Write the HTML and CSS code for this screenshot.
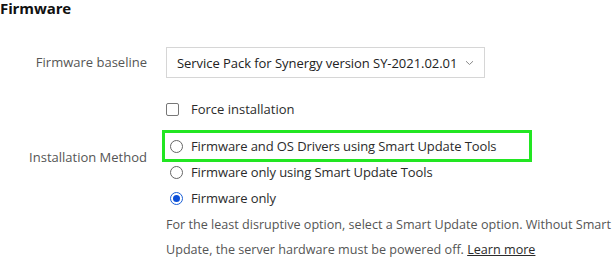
FILE: index.html
```html
<!DOCTYPE html>
<html>
<head>
<meta charset="utf-8">
<link rel="stylesheet" href="styles.css">
</head>
<body>
<div class="page">
  <h2 class="title">Firmware</h2>
  <div class="form">
    <div class="label label-select">Firmware baseline</div>
    <div class="control">
      <div class="select">
        <span class="select-text">Service Pack for Synergy version SY-2021.02.01</span>
        <svg class="chev" width="9" height="6" viewBox="0 0 9 6"><path d="M1 1.2 L4.5 4.5 L8 1.2" fill="none" stroke="#8a8a8a" stroke-width="1"/></svg>
      </div>
    </div>

    <div class="label"></div>
    <div class="control">
      <label class="check-row"><span class="checkbox"></span><span>Force installation</span></label>
    </div>

    <div class="label label-method">Installation Method</div>
    <div class="control">
      <div class="radios">
        <div class="highlight"></div>
        <div class="radio-row"><span class="radio"></span><span>Firmware and OS Drivers using Smart Update Tools</span></div>
        <div class="radio-row"><span class="radio"></span><span>Firmware only using Smart Update Tools</span></div>
        <div class="radio-row"><span class="radio checked"></span><span>Firmware only</span></div>
      </div>
      <p class="help">For the least disruptive option, select a Smart Update option. Without Smart Update, the server hardware must be powered off. <a class="link">Learn more</a></p>
    </div>
  </div>
</div>
</body>
</html>
```

FILE: styles.css
```css
html, body {
  margin: 0;
  padding: 0;
  background: #fff;
}
body {
  font-family: "Open Sans", "Noto Sans", sans-serif;
  font-size: 13px;
  color: #2b2b2b;
  width: 616px;
  height: 258px;
  overflow: hidden;
}
.title {
  margin: 0;
  font-size: 15px;
  font-weight: 700;
  line-height: 16px;
  color: #111;
  letter-spacing: -0.1px;
}
.form {
  display: grid;
  grid-template-columns: 147px 1fr;
  column-gap: 19px;
  margin-top: 31px;
}
.label {
  text-align: right;
  color: #555;
  font-size: 13px;
}
.label-select {
  line-height: 31px;
}
.label-method {
  padding-top: 32px;
  line-height: 18px;
}
.control {
  min-width: 0;
}
.select {
  height: 29px;
  border: 1px solid #d6d6d6;
  display: flex;
  align-items: center;
  justify-content: space-between;
  padding: 0 10px 0 10px;
  box-sizing: content-box;
  width: 297px;
}
.select-text {
  color: #222;
  white-space: nowrap;
  letter-spacing: -0.05px;
}
.chev {
  display: block;
}
.check-row {
  display: flex;
  align-items: center;
  gap: 12px;
  margin-top: 24px;
  height: 14px;
  line-height: 14px;
}
.checkbox {
  width: 11px;
  height: 11px;
  border: 1px solid #777;
  border-radius: 2px;
  flex: none;
}
.radios {
  position: relative;
  margin-top: 17px;
  padding-left: 4px;
}
.radio-row {
  display: flex;
  align-items: center;
  gap: 8px;
  height: 26px;
  line-height: 18px;
  letter-spacing: -0.1px;
}
.radio {
  width: 11px;
  height: 11px;
  border: 1px solid #666;
  border-radius: 50%;
  flex: none;
  box-sizing: content-box;
  position: relative;
}
.radio.checked {
  border-color: #1a5fd6;
  background: #fff;
}
.radio.checked::after {
  content: "";
  position: absolute;
  left: 2px;
  top: 2px;
  width: 7px;
  height: 7px;
  border-radius: 50%;
  background: #0b4fd9;
}
.highlight {
  position: absolute;
  left: -4px;
  top: -3px;
  width: 364px;
  height: 26px;
  border: 3px solid #22e622;
  pointer-events: none;
}
.help {
  margin: 1px 0 0 0;
  font-size: 12.6px;
  line-height: 25px;
  color: #555;
}
.link {
  color: #2b2b2b;
  text-decoration: underline;
}
```
